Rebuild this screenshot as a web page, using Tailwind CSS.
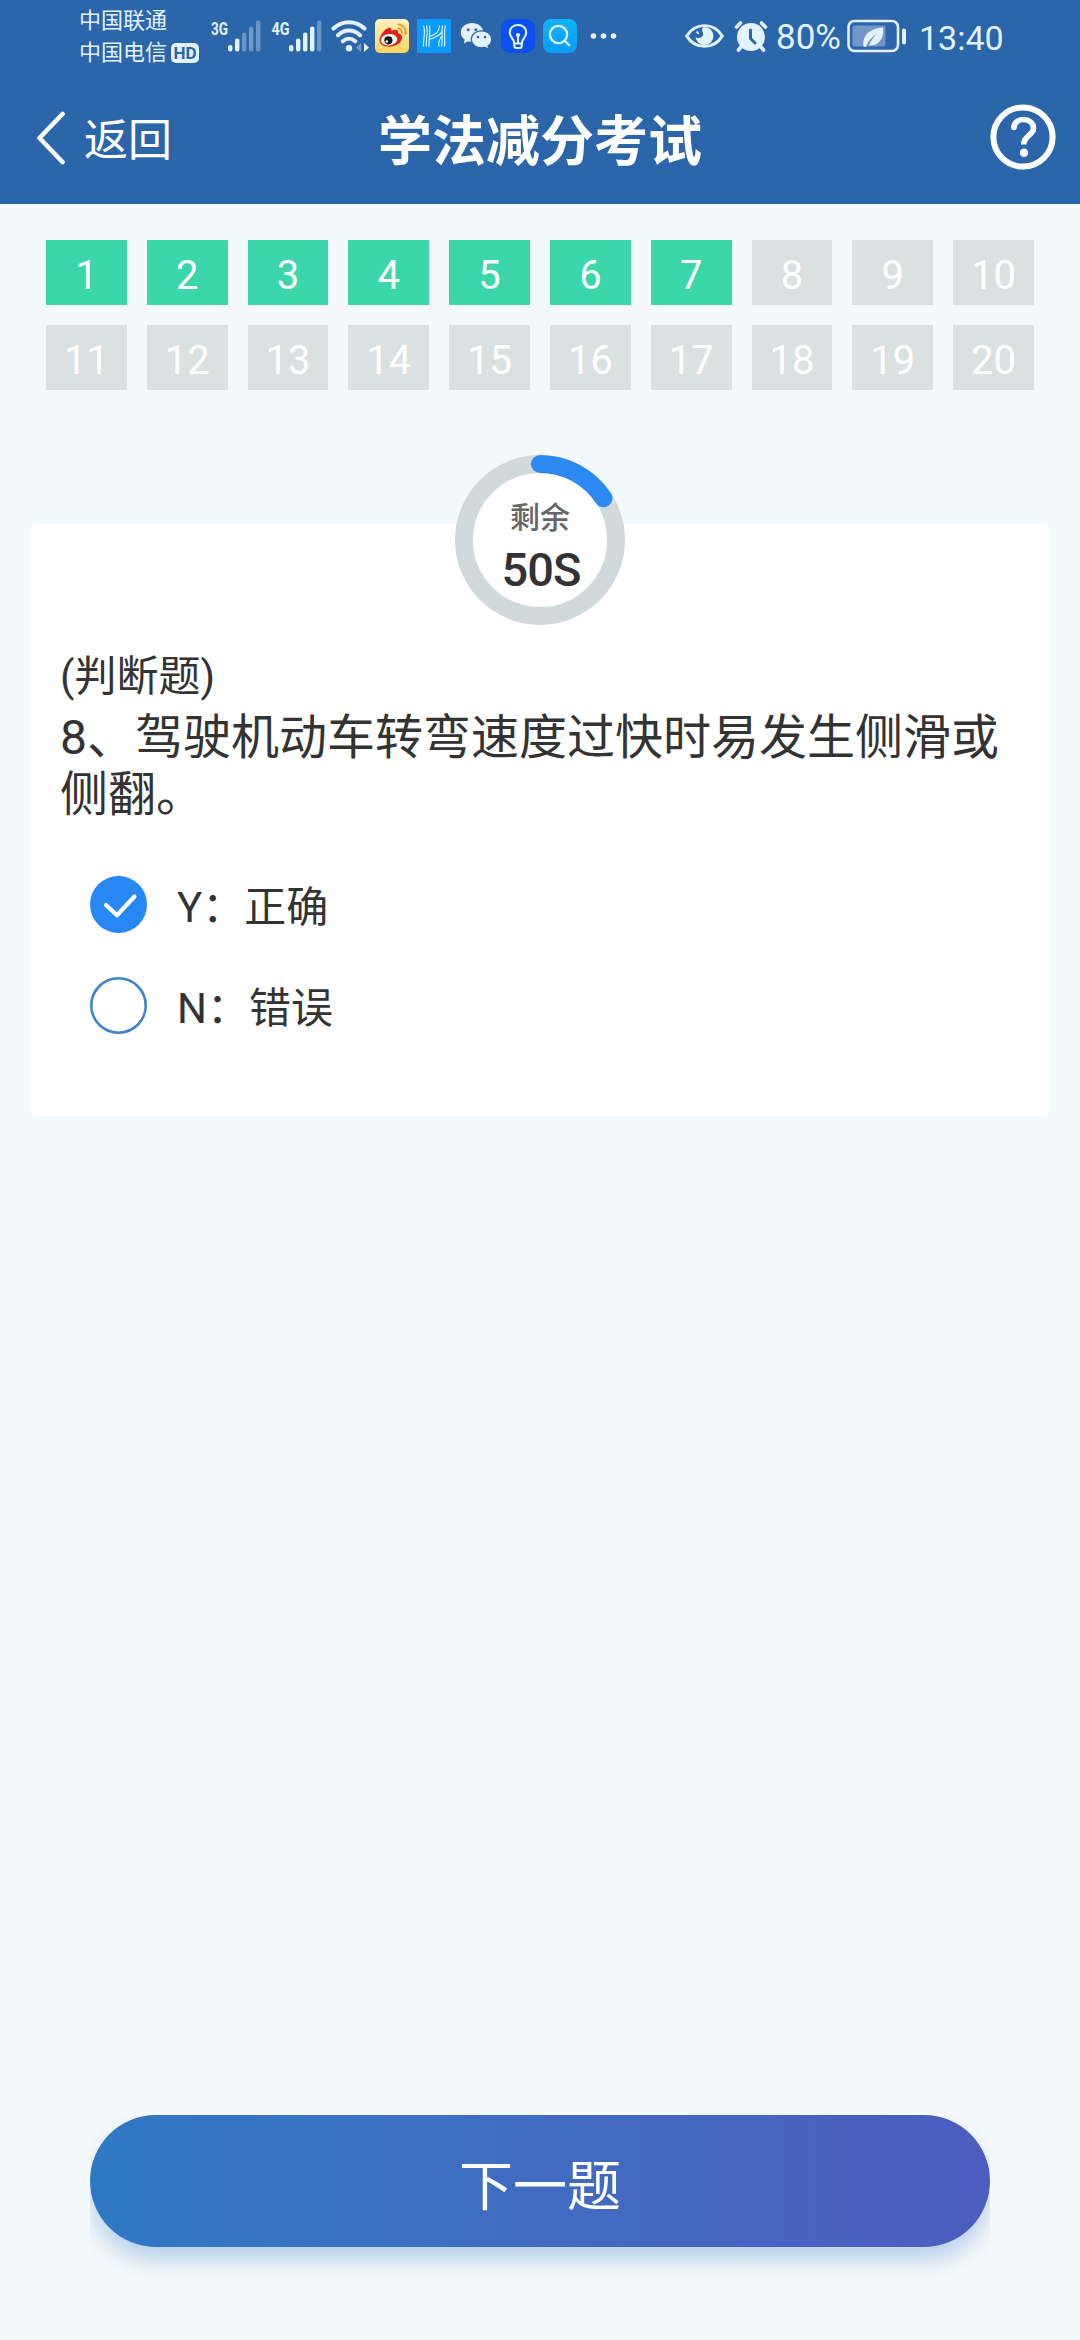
<!DOCTYPE html>
<html lang="zh-CN">
<head>
<meta charset="utf-8">
<title>学法减分考试</title>
<script src="https://cdn.jsdelivr.net/npm/@tailwindcss/browser@4"></script>
</head>
<body class="w-[1080px] h-[2340px] overflow-hidden bg-[#f4f9fb] font-['Roboto','Noto_Sans_CJK_SC',sans-serif] text-[#333333] flex flex-col">

<header class="h-[204px] shrink-0 bg-[#2b65aa] text-white flex flex-col">
  <!-- status bar -->
  <div class="h-[72px] shrink-0 flex items-center text-[#e2f2ff] pl-[79px]">
    <div class="w-[121px] pt-[2px] flex flex-col text-[22px] leading-[32px]">
      <span>中国联通</span>
      <div class="flex items-center gap-[4px]"><span>中国电信</span><span class="w-[28px] h-[20px] rounded-[5px] bg-[#e2f2ff] text-[#2b65aa] text-[17px] leading-[20px] font-bold text-center">HD</span></div>
    </div>
    <svg class="ml-[10px] shrink-0" width="52" height="72" viewBox="0 0 52 72" fill="currentColor">
      <text x="1" y="34.500" font-size="19" font-weight="700" textLength="17" lengthAdjust="spacingAndGlyphs">3G</text>
      <rect x="18" y="45" width="4.400" height="6.500" rx="2"/><rect x="25" y="38.500" width="4.400" height="13" rx="2"/>
      <g opacity=".35"><rect x="32" y="32.500" width="4.400" height="19" rx="2"/><rect x="39" y="26.500" width="4.400" height="25" rx="2"/><rect x="46" y="20.500" width="4.400" height="31" rx="2"/></g>
    </svg>
    <svg class="ml-[9px] shrink-0" width="52" height="72" viewBox="0 0 52 72" fill="currentColor">
      <text x="0.500" y="34.500" font-size="19" font-weight="700" textLength="18" lengthAdjust="spacingAndGlyphs">4G</text>
      <rect x="18" y="45" width="4.400" height="6.500" rx="2"/><rect x="25" y="38.500" width="4.400" height="13" rx="2"/><rect x="32" y="32.500" width="4.400" height="19" rx="2"/><rect x="39" y="26.500" width="4.400" height="25" rx="2"/>
      <rect x="46" y="20.500" width="4.400" height="31" rx="2" opacity=".35"/>
    </svg>
    <svg class="ml-[8px] shrink-0" width="38" height="72" viewBox="0 0 38 72" fill="none" stroke="currentColor" stroke-width="4" stroke-linecap="round">
      <path d="M2.500 28.500C11 20 25 20 33.500 28.500M7 35.300C13.500 29 22.500 29 29 35.300M11.800 41.300C15.500 38 20.500 38 24.200 41.300"/>
      <circle cx="18" cy="48.200" r="3.200" fill="currentColor" stroke="none"/>
      <path d="M33 43l5 4.500-5 4.500z" fill="currentColor" stroke="none"/><path d="M30 43l-5 4.500 5 4.500z" fill="currentColor" stroke="none" opacity=".4"/>
    </svg>
    <!-- weibo -->
    <svg class="ml-[6px] shrink-0" width="34" height="34" viewBox="0 0 34 34">
      <defs><linearGradient id="wb" x1="0" y1="0" x2="0" y2="1"><stop offset="0" stop-color="#fff1c4"/><stop offset="1" stop-color="#ffd35c"/></linearGradient></defs>
      <rect width="34" height="34" rx="5" fill="url(#wb)"/>
      <path d="M13 9C16 8 17 10 16.500 12C20 10 24 10.500 23 14C26.500 15 28 17.500 26.500 21C24.500 25.500 18.500 28 13 27.500C7.500 27.500 4 24.500 4.500 20.500C5 16.500 9 11 13 9Z" fill="#dc2118"/>
      <ellipse cx="14" cy="20.700" rx="8.300" ry="5.700" fill="#fff" transform="rotate(-6 14 20.700)"/>
      <circle cx="13.400" cy="21.300" r="4.100" fill="#151515"/><circle cx="11.800" cy="22.500" r="1.300" fill="#fff"/>
      <path d="M22.500 9.200a4.500 4.500 0 0 1 4.300 5.500M22.500 5.200a8.400 8.400 0 0 1 8 10.500" fill="none" stroke="#e6a12f" stroke-width="2"/>
    </svg>
    <!-- H travel app -->
    <svg class="ml-[8px] shrink-0" width="34" height="34" viewBox="0 0 34 34" fill="none" stroke="#e8f8ff" stroke-width="1.100">
      <rect width="34" height="34" fill="#0c9bfb" stroke="none"/>
      <path d="M6.500 6.500C9 13 6 19 6.500 27.500M9.500 6.500C11.500 13 8.800 19 9.300 27.500M12.500 6.500C13.500 12 12 18 12 27.500M28.500 6.500C26.500 13 28.500 20 27.500 27.500M25.500 6.500C24.500 13 25.700 20 24.700 27.500M22.500 6.500C22 13.500 19 15 12.500 17.500M24.800 12.500C23 17.500 18 18 12.300 20.500M22 27.500C21.500 23.500 22.500 20 24.500 17.500"/>
    </svg>
    <!-- wechat -->
    <svg class="ml-[9px] shrink-0" width="33" height="34" viewBox="0 0 33 34">
      <path d="M12 4C5.500 4 .800 8.300 .800 13.500c0 3 1.600 5.500 4 7.200L3.800 24.500l4.200-2.200c1.300.400 2.600.500 4 .500 6.500 0 11.300-4 11.300-9.300S18.500 4 12 4Z" fill="#e2f2ff"/>
      <path d="M21.500 11.800c-5.700 0-10.200 3.700-10.200 8.500s4.500 8.500 10.200 8.500c1.200 0 2.400-.200 3.500-.500l4 2-1-3.300c2.300-1.600 3.700-4 3.700-6.700 0-4.800-4.500-8.500-10.200-8.500Z" fill="#e2f2ff" stroke="#2b65aa" stroke-width="1.200"/>
      <g fill="#2b65aa"><circle cx="8.200" cy="10.700" r="1.500"/><circle cx="15.800" cy="10.700" r="1.500"/><circle cx="18" cy="18" r="1.300"/><circle cx="25" cy="18" r="1.300"/></g>
    </svg>
    <!-- bulb -->
    <svg class="ml-[8px] shrink-0" width="34" height="34" viewBox="0 0 34 34" fill="none" stroke="#e2f2ff" stroke-width="2.100">
      <rect width="34" height="34" rx="9" fill="#0c50f4" stroke="none"/>
      <path d="M13 24.500V23C13 20.500 8.800 18.500 8.800 13.500C8.800 9 12.300 6 17 6S25.200 9 25.200 13.500C25.200 18.500 21 20.500 21 23V24.500ZM17 17V24M13.300 24.500v2.500q0 2 2 2h3.400q2 0 2-2v-2.500"/>
      <circle cx="17" cy="16" r="2" fill="#e2f2ff" stroke="none"/>
    </svg>
    <!-- search -->
    <svg class="ml-[8px] shrink-0" width="34" height="34" viewBox="0 0 34 34" fill="none" stroke="#e2f2ff" stroke-width="2.300" stroke-linecap="round">
      <defs><linearGradient id="sr" x1="0" y1="0" x2="0" y2="1"><stop offset="0" stop-color="#10b4f8"/><stop offset="1" stop-color="#0a9cfa"/></linearGradient></defs>
      <rect width="34" height="34" rx="8" fill="url(#sr)" stroke="none"/>
      <circle cx="15.500" cy="15.500" r="8.600"/><path d="M21.700 21.700l4.500 4.500"/>
    </svg>
    <svg class="ml-[13px] shrink-0" width="27" height="34" viewBox="0 0 27 34" fill="currentColor"><circle cx="3.500" cy="17" r="2.800"/><circle cx="13.500" cy="17" r="2.800"/><circle cx="23.500" cy="17" r="2.800"/></svg>
    <!-- eye -->
    <svg class="ml-[68px] shrink-0" width="39" height="28" viewBox="0 0 39 28">
      <path d="M1.700 14C10 -1.300 29 -1.300 37.300 14C29 29.300 10 29.300 1.700 14Z" transform="translate(0 1.400) scale(1 .9)" fill="none" stroke="#e2f2ff" stroke-width="3"/>
      <path d="M19.500 5a9 9 0 1 1-9 9.500c1.200 1.700 4 2 5.800.8c2.200-1.500 2.300-4 1-6.300c-.9-1.500 .2-3.800 2.200-4Z" fill="#e2f2ff"/>
      <path d="M11.700 9.500l2 2.500" stroke="#e2f2ff" stroke-width="2"/>
    </svg>
    <!-- alarm -->
    <svg class="ml-[10px] shrink-0" width="34" height="34" viewBox="0 0 34 34" fill="none" stroke="#e2f2ff" stroke-width="3.600" stroke-linecap="round">
      <circle cx="17" cy="18" r="14" fill="#e2f2ff" stroke="none"/>
      <path d="M2.500 8l4-4M31.500 8l-4-4M7 28l-2.500 3M27 28l2.500 3"/>
      <path d="M16.500 11v8.500l4.500 4.500" stroke="#2b65aa" stroke-width="3"/>
    </svg>
    <span class="ml-[8px] w-[66px] text-[35px] leading-[72px] pt-[2px] h-[72px] whitespace-nowrap">80%</span>
    <!-- battery -->
    <svg class="ml-[5px] shrink-0" width="60" height="34" viewBox="0 0 60 34" fill="none">
      <rect x="1.500" y="2" width="49.500" height="30" rx="6" stroke="#e2f2ff" stroke-width="2.600"/>
      <rect x="5.500" y="6.500" width="33" height="21" rx="2" fill="#7196c8"/>
      <path d="M16.500 27.500C15.500 18 20 10 36 8.500C37.500 19 32 27 22 26.500C24 21 27 17.500 31 14.500C25 17.500 21 21.500 19 28Z" fill="#e2f2ff"/>
      <rect x="55" y="9.500" width="4" height="16" rx="2" fill="#e2f2ff"/>
    </svg>
    <span class="ml-[12px] text-[34px] leading-[72px] pt-[2px] h-[72px] whitespace-nowrap">13:40</span>
  </div>
  <!-- title bar -->
  <div class="flex-1 grid grid-cols-[1fr_auto_1fr] items-center pb-0.5">
    <div class="flex items-center pl-[35px]">
      <svg width="32" height="56" viewBox="0 0 32 56" fill="none" stroke="#fff" stroke-width="4.600" stroke-linecap="round" stroke-linejoin="round"><path d="M27.500 5L4.500 29L27.500 53"/></svg>
      <span class="ml-[17px] pt-[7px] text-[44px] leading-none">返回</span>
    </div>
    <h1 class="pt-[12px] text-[54px] leading-none font-bold">学法减分考试</h1>
    <div class="flex justify-end pr-[24px]">
      <svg width="66" height="66" viewBox="0 0 66 66" fill="none" stroke="#fff" stroke-width="6"><circle cx="33" cy="33" r="29.600"/><path d="M24 23.500C24 12.500 43.500 13 43.500 24.500C43.500 31 33.700 31.500 33.700 40.500" stroke-width="5.600"/><circle cx="24" cy="23.500" r="2.800" fill="#fff" stroke="none"/><circle cx="34" cy="48.800" r="4.200" fill="#fff" stroke="none"/></svg>
    </div>
  </div>
</header>

<!-- question index -->
<nav class="mt-[36px] mx-[46px] grid grid-cols-10 gap-5 text-[40px] leading-[72px] text-center text-white *:h-[65px] *:bg-[#dbe0e0]">
  <span class="bg-[#3bd6aa]!">1</span><span class="bg-[#3bd6aa]!">2</span><span class="bg-[#3bd6aa]!">3</span><span class="bg-[#3bd6aa]!">4</span><span class="bg-[#3bd6aa]!">5</span><span class="bg-[#3bd6aa]!">6</span><span class="bg-[#3bd6aa]!">7</span><span>8</span><span>9</span><span>10</span>
  <span>11</span><span>12</span><span>13</span><span>14</span><span>15</span><span>16</span><span>17</span><span>18</span><span>19</span><span>20</span>
</nav>

<!-- question card -->
<main class="relative mt-[134px] mx-[30px] h-[592px] shrink-0 rounded-lg bg-white px-[30px] pt-[124px]">
  <div class="absolute left-1/2 -top-[69px] -ml-[85px] size-[170px]">
    <svg class="absolute inset-0" width="170" height="170" viewBox="0 0 170 170" fill="none" stroke-width="18">
      <circle cx="85" cy="85" r="76" fill="#fff" stroke="#d1d9da"/>
      <path d="M85 9A76 76 0 0 1 148.500 43.200" stroke="#2c89f1" stroke-linecap="round"/>
    </svg>
    <div class="relative flex flex-col items-center pt-[45px]">
      <span class="text-[30px] leading-[36px] font-medium text-[#666666]">剩余</span>
      <span class="text-[47px] leading-[54px] font-medium mt-[7px] ml-[2px] tracking-[-1px]">50S</span>
    </div>
  </div>
  <p class="text-[42px] leading-[58px]">(判断题)</p>
  <p class="text-[48px] leading-[57px] mt-[3px]">8、驾驶机动车转弯速度过快时易发生侧滑或侧翻。</p>
  <ul class="mt-[41px] ml-[30px] flex flex-col gap-[21px] text-[42px] leading-[80px]">
    <li class="flex items-center h-[80px]">
      <svg width="57" height="57" viewBox="0 0 57 57" fill="none"><circle cx="28.500" cy="28.500" r="28.500" fill="#2787f5"/><path d="M16 29l11 10.300L44.500 20.500" stroke="#fff" stroke-width="4.200" stroke-linecap="round" stroke-linejoin="round"/></svg>
      <span class="ml-[30px] pt-[8px]">Y：正确</span>
    </li>
    <li class="flex items-center h-[80px]">
      <svg width="57" height="57" viewBox="0 0 57 57" fill="none"><circle cx="28.500" cy="28.500" r="27.200" stroke="#3f84c8" stroke-width="2.600"/></svg>
      <span class="ml-[30px] pt-[8px]">N：错误</span>
    </li>
  </ul>
</main>

<!-- the drop shadow is cut at the button's sides -->
<footer class="mt-auto mx-[90px] h-[225px] shrink-0 overflow-hidden">
  <button class="block w-full h-[132px] rounded-full bg-linear-to-r from-[#2e79c3] to-[#4c5dbf] shadow-[0_14px_20px_rgba(47,110,185,0.28)] text-white text-[54px] leading-[132px] pt-[7px]">下一题</button>
</footer>
</body>
</html>
